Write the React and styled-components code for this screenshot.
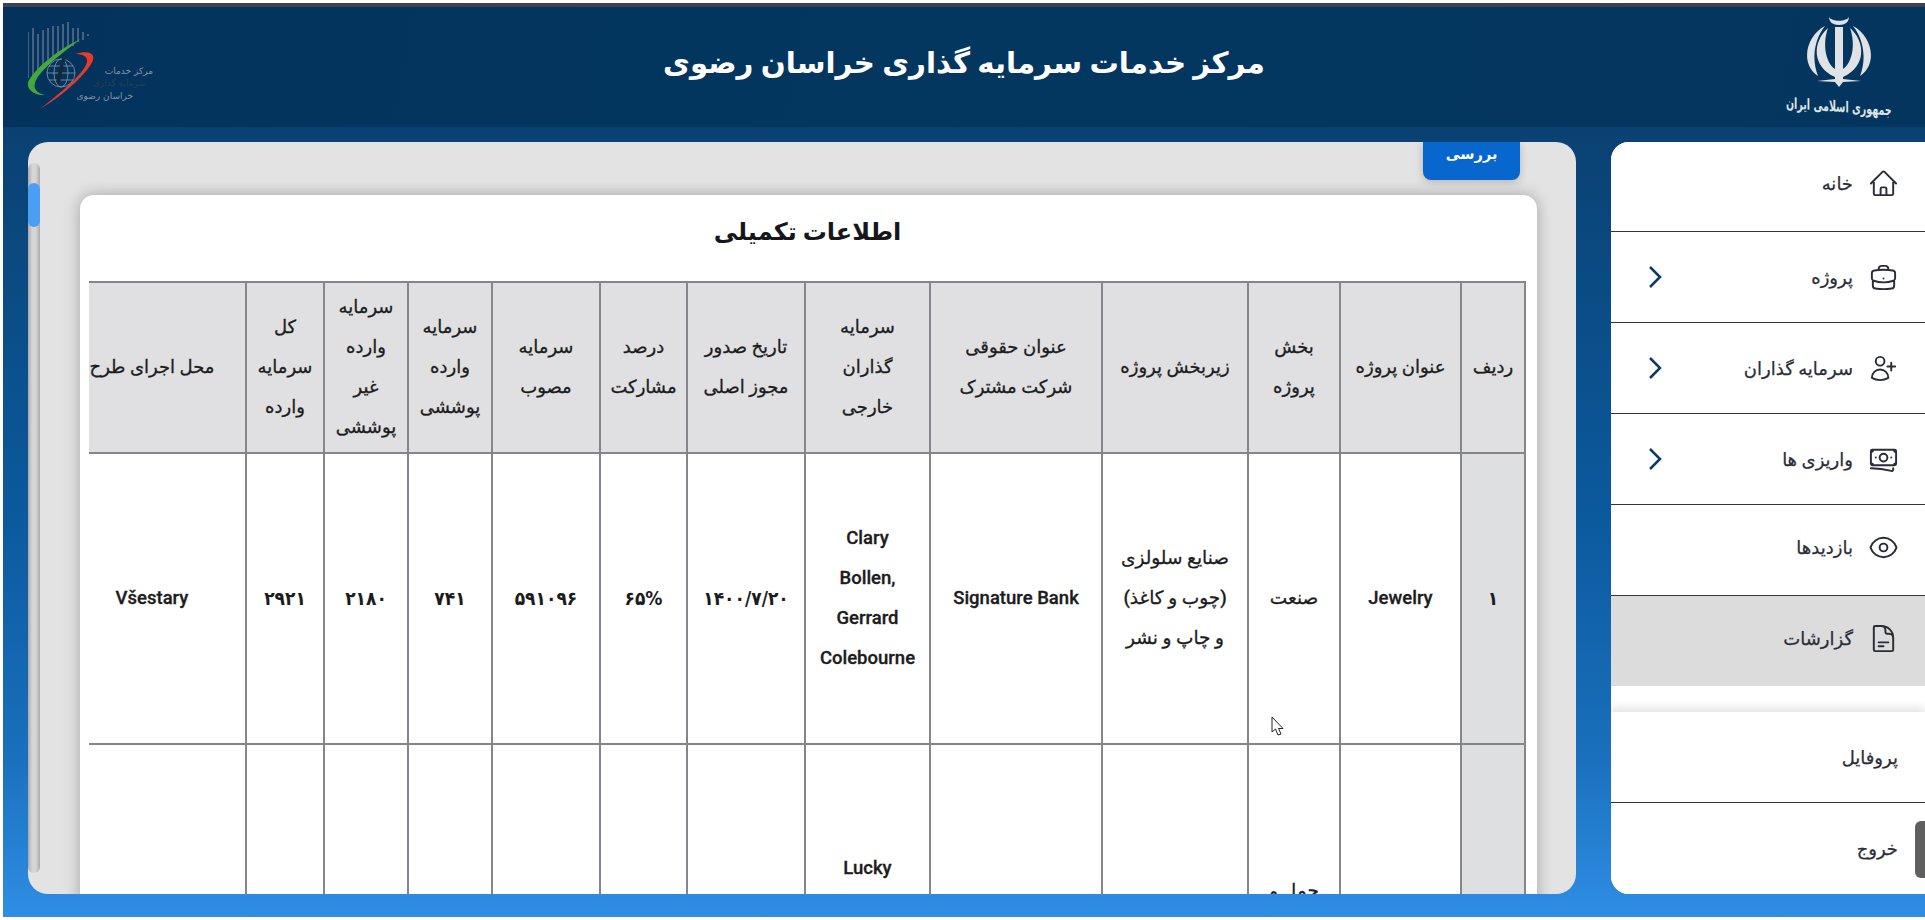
import React from "react";
import styled, { createGlobalStyle } from "styled-components";
import {
  HiOutlineHome,
  HiOutlineBriefcase,
  HiOutlineUserPlus,
  HiOutlineBanknotes,
  HiOutlineEye,
  HiOutlineDocumentText,
} from "react-icons/hi2";

const menu = [
  { label: "خانه", Icon: HiOutlineHome, lift: 7 },
  { label: "پروژه", Icon: HiOutlineBriefcase, more: true },
  { label: "سرمایه گذاران", Icon: HiOutlineUserPlus, more: true },
  { label: "واریزی ها", Icon: HiOutlineBanknotes, more: true },
  { label: "بازدیدها", Icon: HiOutlineEye, lift: 5 },
  { label: "گزارشات", Icon: HiOutlineDocumentText, active: true, lift: 5 },
];

const columns = [
  { title: "ردیف", width: 64 },
  { title: "عنوان پروژه", width: 121 },
  { title: "بخش\nپروژه", width: 92 },
  { title: "زیربخش پروژه", width: 146 },
  { title: "عنوان حقوقی\nشرکت مشترک", width: 172 },
  { title: "سرمایه\nگذاران\nخارجی", width: 125 },
  { title: "تاریخ صدور\nمجوز اصلی", width: 118 },
  { title: "درصد\nمشارکت", width: 87 },
  { title: "سرمایه\nمصوب", width: 108 },
  { title: "سرمایه\nوارده\nپوششی", width: 84 },
  { title: "سرمایه\nوارده\nغیر\nپوششی", width: 84 },
  { title: "کل\nسرمایه\nوارده", width: 78 },
  { title: "محل اجرای طرح", width: 188 },
];

const firstRow = [
  { value: "Jewelry" },
  { value: "صنعت" },
  { value: "صنایع سلولزی\n(چوب و کاغذ)\nو چاپ و نشر" },
  { value: "Signature Bank" },
  { value: "Clary\nBollen,\nGerrard\nColebourne" },
  { value: "۱۴۰۰/۷/۲۰", digits: true },
  { value: "۶۵%", digits: true },
  { value: "۵۹۱۰۹۶", digits: true },
  { value: "۷۴۱", digits: true },
  { value: "۲۱۸۰", digits: true },
  { value: "۲۹۲۱", digits: true },
  { value: "Všestary" },
];

const App = () => {
  return (
    <Page dir="rtl">
      <GlobalStyle />
      <TopStrip />
      <Header>
        <Emblem>
          <svg width="70" height="70" viewBox="0 0 70 70" fill="#dfe3e6">
            <path d="M21 9C3 18-5 46 14 59 8 44 9 24 21 9Z" />
            <path d="M49 9C67 18 75 46 56 59 62 44 61 24 49 9Z" />
            <path d="M24 11C8 25 8 50 31 60L31 52C22 46 18 28 24 11Z" />
            <path d="M46 11C62 25 62 50 39 60L39 52C48 46 52 28 46 11Z" />
            <path d="M31 10H39V62L57 64 39 65 35 70 31 65 13 64 31 62Z" />
            <path d="M25 0C28 5 42 5 45 0 45 5 41 8 35 8S25 5 25 0Z" />
          </svg>
          <EmblemText>جمهوری اسلامی ایران</EmblemText>
        </Emblem>
        <Title>مرکز خدمات سرمایه گذاری خراسان رضوی</Title>
        <CenterLogo>
          <svg width="130" height="92" viewBox="0 0 130 92" fill="none">
            <g stroke="#8793a3" strokeWidth="1">
              <path d="M0 56V10M5 60V6M10 52V12M15 46V8M20 40V6M25 36V4M30 32V4M35 28V2M40 26V0M45 24V6M50 20V6M55 18V10M60 14V12" />
            </g>
            <path d="M53 17C28 28 6 48 0 60c-2 8 8 14 17 13C4 70 4 62 12 52 22 40 38 28 53 17Z" fill="#46a83a" />
            <path d="M47 32C60 28 67 31 65 38 62 48 38 72 12 87 36 68 57 50 59 40 60 34 54 32 47 32Z" fill="#e8392c" />
            <g stroke="#8a97a8" strokeWidth="0.8">
              <circle cx="33" cy="51" r="14" />
              <ellipse cx="33" cy="51" rx="7" ry="14" />
              <path d="M19 51H47M21 44H45M21 58H45" />
            </g>
            <path d="M34 43L30 60" stroke="#1b2430" strokeWidth="3.5" />
            <circle cx="35.500" cy="38" r="2" fill="#1b2430" />
            <g fontFamily="'DejaVu Sans', sans-serif" fontSize="9" textAnchor="start">
              <LogoLine x="125" y="52">مرکز خدمات</LogoLine>
              <LogoLine x="118" y="64" $dim>سرمایه گذاری</LogoLine>
              <LogoLine x="105" y="77">خراسان رضوی</LogoLine>
            </g>
          </svg>
        </CenterLogo>
      </Header>
      <Content>
        <Sidebar>
          <MenuList>
            {menu.map(({ label, Icon, more, active, lift }) => (
              <MenuRow key={label} $active={active} $lift={lift}>
                <Icon size={31} strokeWidth={1.5} />
                <MenuLabel>{label}</MenuLabel>
                {more && (
                  <Chevron width="14" height="24" viewBox="0 0 14 24" fill="none">
                    <path d="M2 2L12 12L2 22" stroke="#0d3a63" strokeWidth="2.5" />
                  </Chevron>
                )}
              </MenuRow>
            ))}
          </MenuList>
          <AccountList>
            <AccountRow>پروفایل</AccountRow>
            <AccountRow>
              خروج
              <SideThumb />
            </AccountRow>
          </AccountList>
        </Sidebar>
        <Panel>
          <PanelBody>
            <ActionRow>
              <ReviewButton>بررسی</ReviewButton>
            </ActionRow>
            <Card>
              <CardTitle>اطلاعات تکمیلی</CardTitle>
              <TableClip>
                <Table>
                  <colgroup>
                    {columns.map((c) => (
                      <Col key={c.title} $w={c.width} />
                    ))}
                  </colgroup>
                  <thead>
                    <tr>
                      {columns.map((c) => (
                        <Th key={c.title}>{c.title}</Th>
                      ))}
                    </tr>
                  </thead>
                  <tbody>
                    <Row $h={291}>
                      <IndexCell $digits>۱</IndexCell>
                      {firstRow.map((cell) => (
                        <Td key={cell.value} $digits={cell.digits}>
                          {cell.value}
                        </Td>
                      ))}
                    </Row>
                    <Row $h={368}>
                      <IndexCell />
                      <Td />
                      <Td $top={126}>حمل و</Td>
                      <Td />
                      <Td />
                      <Td $top={103}>Lucky</Td>
                      <Td />
                      <Td />
                      <Td />
                      <Td />
                      <Td />
                      <Td />
                      <Td />
                    </Row>
                  </tbody>
                </Table>
              </TableClip>
            </Card>
          </PanelBody>
          <Track>
            <Thumb />
          </Track>
          <Cursor width="14" height="20" viewBox="0 0 14 20">
            <path d="M1 1V16L4.500 13 7 19 10 18 7.500 12.500H12Z" fill="#fff" stroke="#222" strokeWidth="1" />
          </Cursor>
        </Panel>
      </Content>
    </Page>
  );
};

const GlobalStyle = createGlobalStyle`
  html, body {
    margin: 0;
    padding: 0;
    background: #fff;
    overflow: hidden;
  }
  * { box-sizing: border-box; }
`;

const Page = styled.div`
  display: flex;
  flex-direction: column;
  width: 1922px;
  height: 914px;
  margin: 3px 0 3px 3px;
  font-family: Roboto, "DejaVu Sans", sans-serif;
  color: #1c1c20;
`;

const TopStrip = styled.div`
  height: 4px;
  flex: none;
  background: #3c4250;
`;

const Header = styled.header`
  flex: none;
  height: 120px;
  display: grid;
  grid-template-columns: 1fr auto 1fr;
  align-items: start;
  padding-top: 10px;
  background: linear-gradient(100deg, #03335c, #03375f 50%, #04355f);
`;

const Emblem = styled.div`
  width: 100px;
  margin-right: 36px;
  display: flex;
  flex-direction: column;
  align-items: center;
`;

const EmblemText = styled.div`
  margin-top: 8px;
  font-family: "DejaVu Serif", "DejaVu Sans", serif;
  font-size: 9.500px;
  font-weight: 700;
  line-height: 24px;
  white-space: nowrap;
  color: #dfe3e6;
  transform: skewY(4deg) scale(1, 1.6);
`;

const Title = styled.h1`
  margin: 24px 0 0;
  font-size: 29.300px;
  line-height: 44px;
  font-weight: 700;
  color: #fff;
  white-space: nowrap;
`;

const CenterLogo = styled.div`
  justify-self: end;
  height: 92px;
  margin: 5px 0 0 25px;
`;

const LogoLine = styled.text`
  fill: ${(p) => (p.$dim ? "#2b3d52" : "#8793a3")};
`;

const Content = styled.div`
  flex: 1;
  min-height: 0;
  display: flex;
  gap: 35px;
  padding: 15px 0 23px 25px;
  background: linear-gradient(180deg, #0a4172 0%, #0b5a9e 50%, #1a70bd 80%, #2f8ee5 100%);
`;

const Sidebar = styled.aside`
  flex: none;
  width: 314px;
  display: flex;
  flex-direction: column;
  overflow: hidden;
  background: #fff;
  border-top-left-radius: 18px;
  border-bottom-left-radius: 18px;
`;

const MenuList = styled.nav`
  flex: none;
  height: 570px;
`;

const MenuRow = styled.div`
  height: ${(p) => (p.$active ? "90px" : "91px")};
  display: flex;
  align-items: center;
  gap: 15px;
  padding: ${(p) => `0 26px ${p.$lift || 0}px 37px`};
  background: ${(p) => (p.$active ? "#dcdcdc" : "#fff")};
  border-bottom: ${(p) => (p.$active ? "none" : "1px solid #33363d")};
  color: #2a2d38;

  &:first-child {
    height: 90px;
  }
`;

const MenuLabel = styled.span`
  font-size: 18px;
  font-weight: 500;
  -webkit-text-stroke: 0.25px currentColor;
`;

const Chevron = styled.svg`
  margin-right: auto;
`;

const AccountList = styled.div`
  flex: 1;
  position: relative;
  background: #fff;
  box-shadow: 0 -5px 8px rgba(0, 0, 0, 0.1);
`;

const AccountRow = styled.div`
  position: relative;
  height: 91px;
  display: flex;
  align-items: center;
  padding: 0 27px;
  font-size: 18px;
  font-weight: 500;
  color: #2a2d38;
  -webkit-text-stroke: 0.25px currentColor;

  &:first-child {
    border-bottom: 1px solid #33363d;
  }
`;

const SideThumb = styled.div`
  position: absolute;
  right: 0;
  top: 18px;
  width: 10px;
  height: 57px;
  border-radius: 6px 0 0 6px;
  background: #5f5f5f;
`;

const Panel = styled.main`
  position: relative;
  flex: 1;
  min-width: 0;
  display: flex;
  overflow: hidden;
  border-radius: 20px;
  background: #e3e3e4;
`;

const PanelBody = styled.div`
  flex: 1;
  min-width: 0;
  padding: 0 39px 0 40px;
`;

const ActionRow = styled.div`
  display: flex;
  height: 38px;
  padding-right: 17px;
`;

const ReviewButton = styled.button`
  width: 97px;
  height: 38px;
  border: 0;
  border-radius: 0 0 8px 8px;
  background: #0867cf;
  box-shadow: 0 2px 8px rgba(0, 0, 0, 0.2);
  color: #fff;
  font: 700 14.500px Roboto, "DejaVu Sans", sans-serif;
  padding-bottom: 14px;
`;

const Card = styled.section`
  margin-top: 15px;
  padding: 0 11px 0 9px;
  height: 900px;
  border-radius: 14px 14px 0 0;
  background: #fff;
  box-shadow: 0 0 16px rgba(0, 0, 0, 0.28);
`;

const CardTitle = styled.h2`
  margin: 0;
  height: 86px;
  padding-top: 17px;
  text-align: center;
  font-size: 24px;
  line-height: 40px;
  font-weight: 700;
  color: #17171b;
`;

const TableClip = styled.div`
  overflow: hidden;
`;

const Table = styled.table`
  width: 1467px;
  table-layout: fixed;
  border-collapse: collapse;
`;

const Col = styled.col`
  width: ${(p) => p.$w}px;
`;

const Th = styled.th`
  height: 171px;
  padding: 0 0 2px;
  border: 2px solid #85858c;
  background: #e0e0e2;
  text-align: center;
  white-space: pre-line;
  font-size: 18px;
  line-height: 40px;
  font-weight: 500;
  color: #1c1c20;
  -webkit-text-stroke: 0.3px currentColor;
`;

const Row = styled.tr`
  height: ${(p) => p.$h}px;
`;

const Td = styled.td`
  padding: ${(p) => (p.$top ? `${p.$top}px 0 0` : "0 0 2px")};
  vertical-align: ${(p) => (p.$top ? "top" : "middle")};
  border: 2px solid #85858c;
  text-align: center;
  white-space: pre-line;
  unicode-bidi: plaintext;
  font-family: ${(p) =>
    p.$digits ? `"DejaVu Sans Condensed", "DejaVu Sans", sans-serif` : "inherit"};
  font-size: ${(p) => (p.$digits ? "19px" : "18.500px")};
  line-height: 40px;
  font-weight: ${(p) => (p.$digits ? 600 : 500)};
  color: #1c1c20;
  -webkit-text-stroke: ${(p) => (p.$digits ? "0" : "0.3px")} currentColor;
`;

const IndexCell = styled(Td)`
  background: #dedfe0;
`;

const Track = styled.div`
  flex: none;
  width: 12px;
  margin: 21px 0;
  padding-top: 20px;
  border-radius: 6px;
  background: linear-gradient(90deg, #a9a9ab, #d6d5d6 35%, #d6d5d6 65%, #a9a9ab);
`;

const Thumb = styled.div`
  height: 44px;
  border-radius: 6px;
  background: #4a9ff5;
`;

const Cursor = styled.svg`
  position: absolute;
  left: 1243px;
  top: 574px;
`;

export default App;
